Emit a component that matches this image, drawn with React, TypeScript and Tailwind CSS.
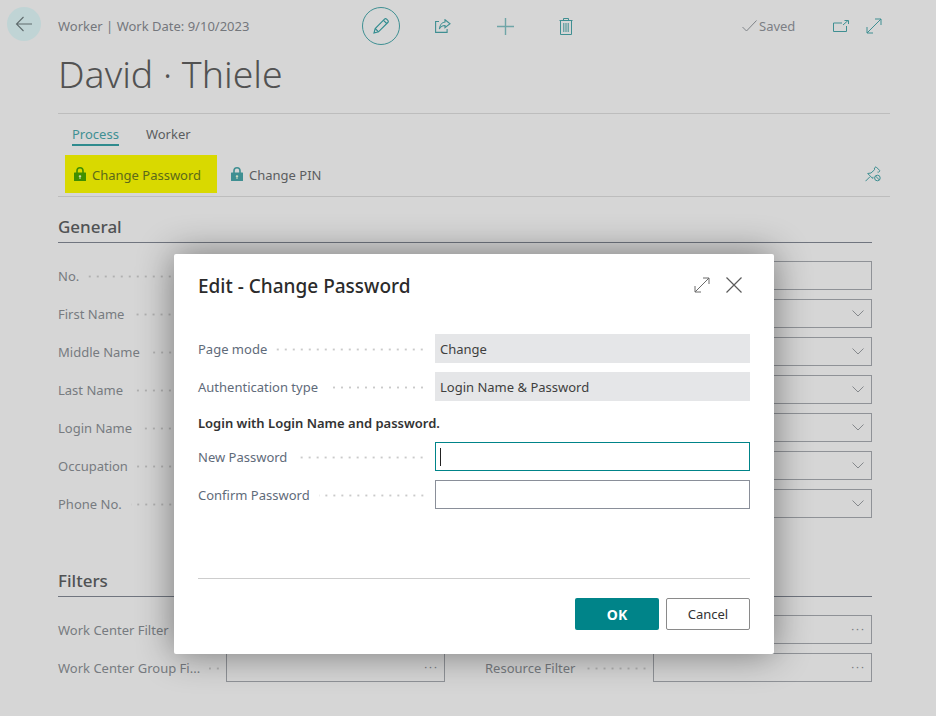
import type { ReactNode } from "react";

function BackArrow() {
  return (
    <svg width="18" height="16" viewBox="0 0 18 16" fill="none" stroke="#5f6b6d" strokeWidth="1.1">
      <path d="M17 8H1.500M8.500 1 1.500 8l7 7" />
    </svg>
  );
}

function Pencil() {
  return (
    <svg width="16" height="16" viewBox="0 0 16 16" fill="none" stroke="#2f8b8e" strokeWidth="1.100">
      <path d="M1 15l1.200-4.500L11.500 1.200a1.500 1.500 0 0 1 2.100 0l1.200 1.200a1.500 1.500 0 0 1 0 2.100L5.500 13.800z" />
      <path d="M2.200 10.500l3.300 3.300M10.500 2.300l3.200 3.200" />
    </svg>
  );
}

function Share() {
  return (
    <svg width="16" height="14" viewBox="0 0 16 14" fill="none" stroke="#3f8f92" strokeWidth="1.100">
      <path d="M4 2.500H.6v10.900h11.500V10" />
      <path d="M10 .8l5 3.900-5 3.900V6.500C7.500 6.500 5.500 7.500 4.300 10 4.700 6.500 7 3.300 10 3z" />
    </svg>
  );
}

function Plus() {
  return (
    <svg width="17" height="17" viewBox="0 0 17 17" fill="none" stroke="#6fa5a7" strokeWidth="1.400">
      <path d="M8.500 0v17M0 8.500h17" />
    </svg>
  );
}

function Trash() {
  return (
    <svg width="14" height="17" viewBox="0 0 14 17" fill="none" stroke="#3f8f92" strokeWidth="1">
      <path d="M.5 2.500h13M1.500 2.500v14h11v-14M4.500 2.500V.5h5v2M4.800 5v9M7 5v9M9.200 5v9" />
    </svg>
  );
}

function SavedCheck() {
  return (
    <svg width="15" height="12" viewBox="0 0 15 12" fill="none" stroke="#7f8388" strokeWidth="1">
      <path d="M.5 7l4 4L14.500.5" />
    </svg>
  );
}

function OpenNew() {
  return (
    <svg width="16" height="12" viewBox="0 0 16 12" fill="none" stroke="#3f8f92" strokeWidth="1">
      <path d="M9 3H.5v8.500h13V6M10 5l5-4.500M11.500.5H15.500V4" />
    </svg>
  );
}

function Expand({ color, size = 16 }: { color: string; size?: number }) {
  return (
    <svg width={size} height={size} viewBox="0 0 16 16" fill="none" stroke={color} strokeWidth="1">
      <path d="M1 15 15 1M9 1h6v6M1 9v6h6" />
    </svg>
  );
}

function Lock({ body, shackle }: { body: string; shackle: string }) {
  return (
    <svg width="12" height="14" viewBox="0 0 12 14" fill="none">
      <path d="M3 6V3.800a3 3 0 0 1 6 0V6" stroke={shackle} strokeWidth="1.600" />
      <rect y="5.500" width="12" height="8.500" rx=".5" fill={body} />
      <path d="M6 8v4M4.800 9.300h2.400" stroke="#e8e8c8" strokeWidth=".9" />
    </svg>
  );
}

function Unpin() {
  return (
    <svg width="16" height="16" viewBox="0 0 16 16" fill="none" stroke="#3f8f92" strokeWidth="1">
      <path d="M.5 15.200 5 10.700M2.700 7.500 6 7l3.600-3.300L9.400 2 11 .8l4 4-1.300 1.300h-1.200" />
      <path d="M2.700 7.500l5 5 .3-1.700" />
      <circle cx="12.400" cy="12" r="2.800" />
      <path d="M10.500 10l3.900 4" />
    </svg>
  );
}

function Chevron() {
  return (
    <svg width="12" height="7" viewBox="0 0 12 7" fill="none" stroke="#85888c" strokeWidth="1">
      <path d="M.5.5 6 6l5.500-5.500" />
    </svg>
  );
}

function Close() {
  return (
    <svg width="16" height="16" viewBox="0 0 16 16" fill="none" stroke="#5a5a5a" strokeWidth="1.200">
      <path d="M.5.500l15 15M15.500.500l-15 15" />
    </svg>
  );
}

function Dots({ tone }: { tone: string }) {
  return <div className={`h-[3px] flex-1 bg-[length:8px_3px] bg-right bg-repeat-x ${tone}`} />;
}

function More() {
  return <span className="mr-[-2px] text-[11px] tracking-[2px] text-[#77797d]">···</span>;
}

function PageField({ label, end }: { label?: string; end?: ReactNode }) {
  return (
    <div className="flex h-[29px] items-center">
      <div className="flex w-[164px] items-center gap-[9px]">
        {label && <span className="whitespace-nowrap pt-[2px] text-[#777b80]">{label}</span>}
        {label && <Dots tone="mt-[2px] bg-[radial-gradient(circle,#b0b0b0_1px,transparent_1.200px)]" />}
      </div>
      <div className="ml-[4px] flex h-[29px] flex-1 items-center justify-end border border-[#8f9297] pr-[7px]">{end}</div>
    </div>
  );
}

function PageSection({ title, children }: { title: string; children: ReactNode }) {
  return (
    <section>
      <h2 className="border-b border-[#70757f] pb-[5px] text-[17px] leading-[21px] font-medium text-[#505254]">{title}</h2>
      {children}
    </section>
  );
}

function DialogField({ label, children }: { label: string; children: ReactNode }) {
  return (
    <div className="flex h-[29px] items-center">
      <div className="flex w-[228px] items-center gap-[9px]">
        <span className="whitespace-nowrap pt-[2px] text-[#5f6b7a]">{label}</span>
        <Dots tone="mt-[2px] bg-[radial-gradient(circle,#cacaca_1px,transparent_1.200px)]" />
      </div>
      <div className="ml-[9px] flex-1">{children}</div>
    </div>
  );
}

const generalLeft = ["No.", "First Name", "Middle Name", "Last Name", "Login Name", "Occupation", "Phone No."];

export default function App() {
  return (
    <div className="relative h-[716px] overflow-hidden bg-[#d6d6d6] font-['Noto_Sans',sans-serif] text-[13px]">
      {/* Page header */}
      <div className="flex h-[45px] items-start pt-[7px] pl-[7px]">
        <div className="flex h-[34px] w-[34px] items-center justify-center rounded-full bg-[#c0d4d5]">
          <BackArrow />
        </div>
        <div className="ml-[17px] h-[38px] w-[304px] pt-[9px] leading-[20px] text-[#74777c]">Worker | Work Date: 9/10/2023</div>
        <div className="flex h-[38px] w-[38px] items-center justify-center rounded-full border border-[#3f9093]">
          <Pencil />
        </div>
        <div className="ml-[28px] flex h-[38px] w-[30px] items-center justify-center"><Share /></div>
        <div className="ml-[32px] flex h-[38px] w-[30px] items-center justify-center"><Plus /></div>
        <div className="ml-[31px] flex h-[38px] w-[30px] items-center justify-center"><Trash /></div>
        <div className="ml-[161px] flex h-[38px] items-center gap-[2px] text-[#7c7f85]">
          <SavedCheck />
          <span className="pt-[2px]">Saved</span>
        </div>
        <div className="ml-[38px] flex h-[38px] items-center"><OpenNew /></div>
        <div className="ml-[17px] flex h-[38px] items-center"><Expand color="#3f8f92" /></div>
      </div>

      <div className="pr-[46px] pl-[58px]">
        <h1 className="h-[69px] border-b border-[#bdbdbd] pt-[1px] text-[37.4px] leading-[56px] font-light text-[#525252]">David · Thiele</h1>

        {/* Action bar */}
        <div className="border-b border-[#bdbdbd]">
          <div className="flex h-[41px] items-start gap-[27px] pt-[11px] pl-[14px] text-[#5b5d60]">
            <span className="border-b-2 border-[#2f8b8e] leading-[19px] text-[#3f9093]">Process</span>
            <span className="leading-[19px]">Worker</span>
          </div>
          <div className="flex h-[41px] items-start">
            <div className="ml-[7px] flex h-[38px] w-[152px] items-center gap-[6px] bg-[#d9d900] pl-[9px] text-[#5c6a1a]">
              <Lock body="#3f8f00" shackle="#3f8f00" />
              <span className="pt-[4px]">Change Password</span>
            </div>
            <div className="ml-[14px] flex h-[38px] items-center gap-[6px] text-[#5b5d60]">
              <Lock body="#3f8f92" shackle="#3f8f92" />
              <span className="pt-[4px]">Change PIN</span>
            </div>
            <div className="mt-[11px] mr-[9px] ml-auto"><Unpin /></div>
          </div>
        </div>
      </div>

      {/* Page body behind the dialog */}
      <div className="pt-[19px] pr-[64px] pl-[58px]">
        <PageSection title="General">
          <div className="grid grid-cols-2 gap-x-10 gap-y-[9px] pt-[18px]">
            {generalLeft.map((label, i) => (
              <div key={label} className="contents">
                <PageField label={label} />
                <PageField end={i === 0 ? undefined : <Chevron />} />
              </div>
            ))}
          </div>
        </PageSection>

        <div className="pt-[52px]">
          <PageSection title="Filters">
            <div className="grid grid-cols-2 gap-x-10 gap-y-[9px] pt-[18px]">
              <PageField label="Work Center Filter" end={<More />} />
              <PageField end={<More />} />
              <PageField label="Work Center Group Fi..." end={<More />} />
              <PageField label="Resource Filter" end={<More />} />
            </div>
          </PageSection>
        </div>
      </div>

      {/* Dialog */}
      <div className="absolute top-[254px] left-[174px] flex h-[400px] w-[600px] flex-col rounded-[2px] bg-white px-[24px] shadow-[0_0_36px_rgba(0,0,0,0.45)]">
        <div className="flex h-[64px] items-center pt-[1px]">
          <h3 className="text-[19px] font-medium text-[#2b2b2b]">Edit - Change Password</h3>
          <div className="mb-[4px] ml-auto flex items-center gap-[16px] pr-[8px]">
            <Expand color="#6a6a6a" />
            <Close />
          </div>
        </div>
        <div className="flex flex-col gap-[9px] pt-[16px]">
          <DialogField label="Page mode">
            <div className="flex h-[29px] items-center bg-[#e5e6e8] pt-[2px] pl-[5px] text-[#3f3f3f]">Change</div>
          </DialogField>
          <DialogField label="Authentication type">
            <div className="flex h-[29px] items-center bg-[#e5e6e8] pt-[2px] pl-[5px] text-[#3f3f3f]">Login Name &amp; Password</div>
          </DialogField>
        </div>
        <div className="flex h-[41px] items-center pt-[5px] font-semibold text-[#333]">Login with Login Name and password.</div>
        <div className="flex flex-col gap-[9px]">
          <DialogField label="New Password">
            <div className="flex h-[29px] items-center border border-[#008489] pl-[4px]">
              <div className="h-[18px] w-px bg-[#222]" />
            </div>
          </DialogField>
          <DialogField label="Confirm Password">
            <div className="h-[29px] border border-[#8a8f99]" />
          </DialogField>
        </div>
        <div className="mt-[69px] border-t border-[#cdcdcd]" />
        <div className="flex justify-end gap-[7px] pt-[19px]">
          <button className="h-[32px] w-[84px] rounded-[2px] bg-[#008489] text-[14px] font-bold text-white">OK</button>
          <button className="h-[32px] w-[84px] rounded-[2px] border border-[#8a8a8a] bg-white pt-[2px] text-[#333]">Cancel</button>
        </div>
      </div>
    </div>
  );
}
